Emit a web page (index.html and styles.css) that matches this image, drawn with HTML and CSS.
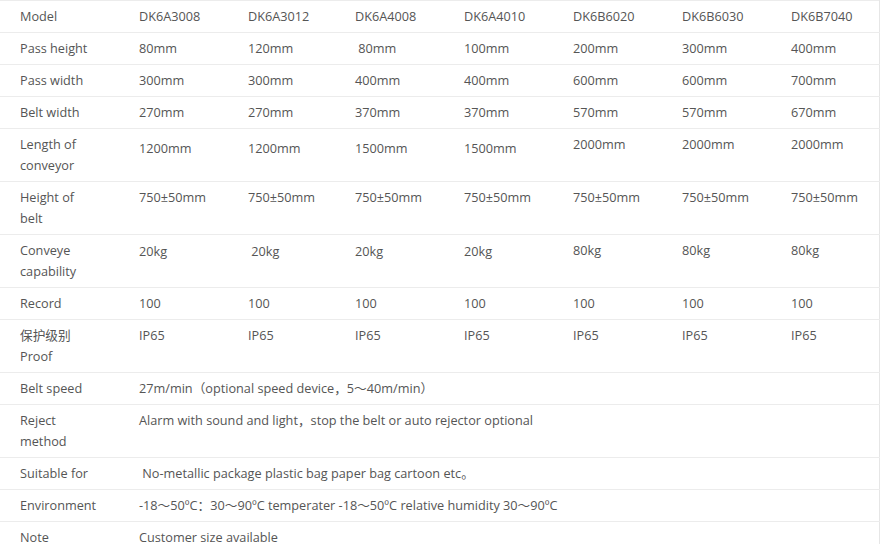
FILE: index.html
```html
<!DOCTYPE html>
<html>
<head>
<meta charset="utf-8">
<link rel="stylesheet" href="styles.css">
</head>
<body>
<table class="spec">
<colgroup>
<col class="c-label"><col class="c-a"><col class="c-b"><col class="c-c"><col class="c-d"><col class="c-e"><col class="c-f"><col class="c-g">
</colgroup>
<tbody>
<tr><td>Model</td><td>DK6A3008</td><td>DK6A3012</td><td>DK6A4008</td><td>DK6A4010</td><td>DK6B6020</td><td>DK6B6030</td><td>DK6B7040</td></tr>
<tr><td>Pass height</td><td>80mm</td><td>120mm</td><td>&nbsp;80mm</td><td>100mm</td><td>200mm</td><td>300mm</td><td>400mm</td></tr>
<tr><td>Pass width</td><td>300mm</td><td>300mm</td><td>400mm</td><td>400mm</td><td>600mm</td><td>600mm</td><td>700mm</td></tr>
<tr><td>Belt width</td><td>270mm</td><td>270mm</td><td>370mm</td><td>370mm</td><td>570mm</td><td>570mm</td><td>670mm</td></tr>
<tr><td>Length of<br>conveyor</td><td class="low">1200mm</td><td class="low">1200mm</td><td class="low">1500mm</td><td class="low">1500mm</td><td>2000mm</td><td>2000mm</td><td>2000mm</td></tr>
<tr><td>Height of<br>belt</td><td>750±50mm</td><td>750±50mm</td><td>750±50mm</td><td>750±50mm</td><td>750±50mm</td><td>750±50mm</td><td>750±50mm</td></tr>
<tr><td>Conveye<br>capability</td><td class="low1">20kg</td><td class="low1">&nbsp;20kg</td><td class="low1">20kg</td><td class="low1">20kg</td><td>80kg</td><td>80kg</td><td>80kg</td></tr>
<tr><td>Record</td><td>100</td><td>100</td><td>100</td><td>100</td><td>100</td><td>100</td><td>100</td></tr>
<tr><td>保护级别<br>Proof</td><td>IP65</td><td>IP65</td><td>IP65</td><td>IP65</td><td>IP65</td><td>IP65</td><td>IP65</td></tr>
<tr><td>Belt speed</td><td colspan="7">27m/min（optional speed device，5～40m/min）</td></tr>
<tr><td>Reject<br>method</td><td colspan="7">Alarm with sound and light，stop the belt or auto rejector optional</td></tr>
<tr><td>Suitable for</td><td colspan="7">&nbsp;No-metallic package plastic bag paper bag cartoon etc。</td></tr>
<tr><td>Environment</td><td colspan="7">-18～50ºC：30～90ºC temperater -18～50ºC relative humidity 30～90ºC</td></tr>
<tr><td>Note</td><td colspan="7">Customer size available</td></tr>
</tbody>
</table>
</body>
</html>
```
FILE: styles.css
```css
html, body {
  margin: 0;
  padding: 0;
  background: #fff;
}
body {
  font-family: "Open Sans", "Noto Sans CJK SC", sans-serif;
  font-size: 12.7px;
  color: #555;
}
.spec {
  border-collapse: collapse;
  table-layout: fixed;
  width: 879px;
  margin-top: 0;
}
.spec td {
  padding: 5px 0 5px 20px;
  line-height: 21px;
  vertical-align: top;
  border-top: 1px solid #ececec;
  border-bottom: 1px solid #ececec;
  white-space: nowrap;
}
.spec td:last-child {
  border-right: 1px solid #e6e6e6;
}
.spec td + td {
  padding-left: 0;
}
.c-label { width: 139px; }
.c-a { width: 109px; }
.c-b { width: 107px; }
.c-c { width: 109px; }
.c-d { width: 109px; }
.c-e { width: 109px; }
.c-f { width: 109px; }
.c-g { width: 88px; }
.spec td.low { padding-top: 9px; }
.spec td.low1 { padding-top: 6px; }
```
